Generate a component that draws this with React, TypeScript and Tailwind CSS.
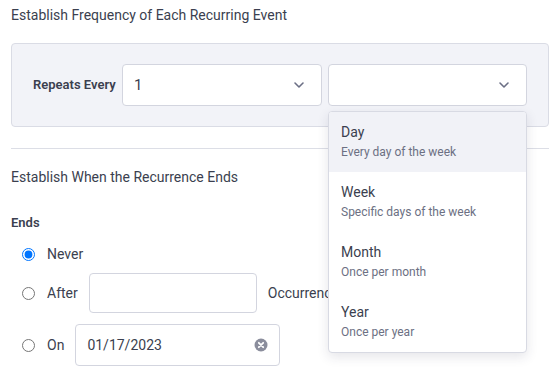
import { ChevronDown } from 'lucide-react'

const OPTIONS = [
    { label: 'Day', hint: 'Every day of the week' },
    { label: 'Week', hint: 'Specific days of the week' },
    { label: 'Month', hint: 'Once per month' },
    { label: 'Year', hint: 'Once per year' },
]

function Select({ value, className }: { value?: string; className: string }) {
    return (
        <div className={`shrink-0 h-[42px] rounded border border-[#d3d5df] bg-white flex items-center justify-between pl-[11px] pr-[14px] ${className}`}>
            <span className="text-[15px] text-[#3b3f4f]">{value}</span>
            <ChevronDown size={16} strokeWidth={2.4} className="text-[#6b6f85]" />
        </div>
    )
}

export default function App() {
    return (
        <div className="relative w-[558px] h-[383px] bg-white overflow-hidden font-['Roboto',sans-serif] text-[#3b3f4f]">
            <div className="pl-[11px] pr-[9px] pt-[5px]">
                {/* Fréquence */}
                <p className="text-[14px] leading-[20px]">Establish Frequency of Each Recurring Event</p>
                <div className="mt-[18px] h-[84px] rounded border border-[#dadce5] bg-[#f2f3f8] flex items-center pl-[21px] pr-[21px]">
                    <span className="text-[13px] font-semibold w-[89px] shrink-0 whitespace-nowrap">Repeats Every</span>
                    <Select value="1" className="w-[200px]" />
                    <Select className="ml-[6px] w-[199px]" />
                </div>

                <div className="mt-[21px] border-t border-[#dcdee6]" />

                {/* Fin de la récurrence */}
                <p className="mt-[18px] text-[14px] leading-[20px]">Establish When the Recurrence Ends</p>
                <p className="mt-[26px] text-[13px] font-semibold leading-[20px]">Ends</p>

                <div className="mt-[10px] flex flex-col">
                    <label className="flex items-center h-[22px]">
                        <input type="radio" name="ends" defaultChecked className="ml-[11px] w-[13px] h-[13px] m-0" />
                        <span className="ml-[12px] text-[14px]">Never</span>
                    </label>
                    <label className="mt-[8px] flex items-center h-[40px]">
                        <input type="radio" name="ends" className="ml-[11px] w-[13px] h-[13px] m-0" />
                        <span className="ml-[12px] text-[14px]">After</span>
                        <div className="ml-[11px] w-[168px] h-[40px] rounded border border-[#d3d5df] bg-white" />
                        <span className="ml-[11px] text-[14px]">Occurrences</span>
                    </label>
                    <label className="mt-[11px] flex items-center h-[42px]">
                        <input type="radio" name="ends" className="ml-[11px] w-[13px] h-[13px] m-0" />
                        <span className="ml-[12px] text-[14px]">On</span>
                        <div className="ml-[11px] w-[205px] h-[42px] rounded border border-[#d3d5df] bg-white flex items-center justify-between pl-[11px] pr-[11px]">
                            <span className="text-[14px]">01/17/2023</span>
                            <svg width="14" height="14" viewBox="0 0 14 14">
                                <circle cx="7" cy="7" r="6.5" fill="#8a8d9c" />
                                <path d="M4.8 4.8 L9.2 9.2 M9.2 4.8 L4.8 9.2" stroke="white" strokeWidth="1.8" strokeLinecap="round" />
                            </svg>
                        </div>
                    </label>
                </div>
            </div>

            {/* Menu déroulant */}
            <div className="absolute left-[328px] top-[111px] w-[199px] rounded border border-[#d8dae3] bg-white shadow-[0_4px_12px_rgba(40,45,70,0.12)] overflow-hidden">
                {OPTIONS.map((o, i) => (
                    <div key={o.label} className={`h-[60px] pl-[12px] pt-[10px] ${i === 0 ? 'bg-[#f1f2f7]' : ''}`}>
                        <p className="text-[14px] leading-[20px] text-[#3b3f4f]">{o.label}</p>
                        <p className="mt-[1px] text-[12px] leading-[18px] text-[#6c7083]">{o.hint}</p>
                    </div>
                ))}
            </div>
        </div>
    )
}
